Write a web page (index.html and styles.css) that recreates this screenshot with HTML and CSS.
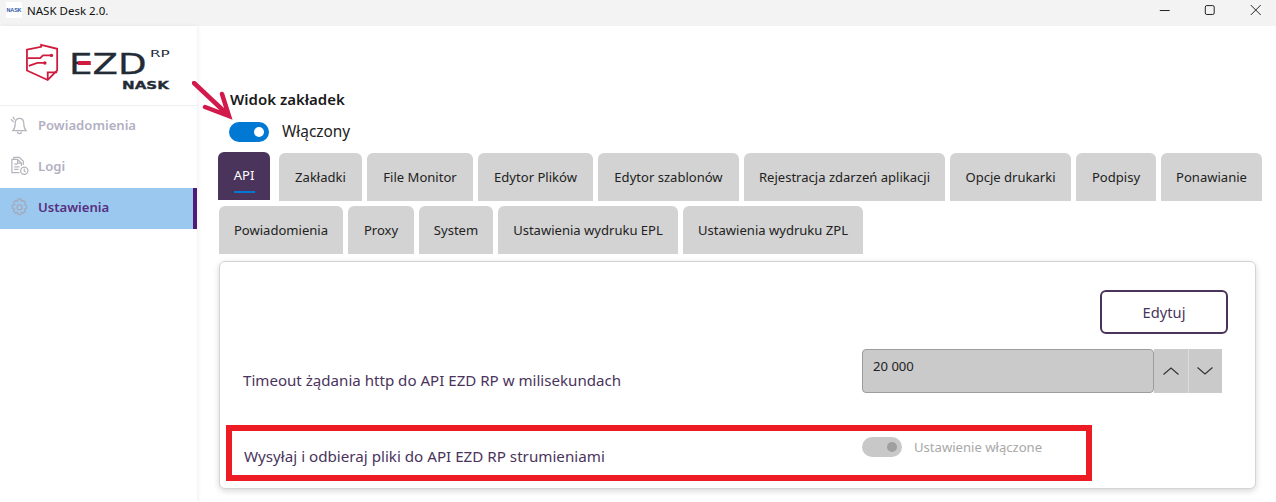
FILE: index.html
```html
<!DOCTYPE html>
<html lang="pl">
<head>
<meta charset="utf-8">
<title>NASK Desk 2.0.</title>
<link rel="stylesheet" href="styles.css">
</head>
<body>
<header class="titlebar">
  <div class="app-icon">NASK</div>
  <div class="app-title">NASK Desk 2.0.</div>
  <div class="win-controls">
    <svg class="win-btn" viewBox="0 0 46 26"><path d="M18 10.5h10"/></svg>
    <svg class="win-btn" viewBox="0 0 46 26"><rect x="18.5" y="5.5" width="9" height="9" rx="1.5"/></svg>
    <svg class="win-btn" viewBox="0 0 46 26"><path d="M18 5l10 10M28 5L18 15"/></svg>
  </div>
</header>
<div class="app">
  <aside class="sidebar">
    <div class="logo">
      <svg class="logo-mark" viewBox="0 0 36 40"><path d="M1 7L16 4V2L33 6V29L23 39L1 29Z"/><path d="M23 39V31H33"/><path d="M2 16H15L18 13H27M3 24L12 21H20"/><circle cx="27" cy="13" r="1.8" class="dot"/><circle cx="20" cy="21" r="1.8" class="dot"/></svg>
      <div class="wordmark">
        <div class="ezd-line"><span class="ezd">EZD</span><span class="rp">RP</span></div>
        <div class="nask">NASK</div>
      </div>
    </div>
    <nav class="nav">
      <div class="nav-item">
        <svg class="nav-icon" viewBox="0 0 20 20"><path d="M10 3c-3 0-4.500 2.500-4.500 5.500 0 4-1 6-2.500 7.500h14c-1.500-1.500-2.500-3.500-2.500-7.500 0-3-1.500-5.500-4.500-5.500zM8 17a2 2 0 0 0 4 0M1 4l3 3M3 1.500l2 3"/></svg>
        <span>Powiadomienia</span>
      </div>
      <div class="nav-item">
        <svg class="nav-icon" viewBox="0 0 20 20"><path d="M10 17H2V3h6l4 4v3M8 3v4h4M4.500 8H8M4.500 11H10M4.500 13.500H9M4 3V1h6l4 4v4"/><circle cx="15" cy="15" r="3.800"/><path d="M15 13v2.200l1.500 1"/></svg>
        <span>Logi</span>
      </div>
      <div class="nav-item active">
        <svg class="nav-icon" viewBox="0 0 20 20"><path d="M8.500 1.500h3l.5 2.500 2-.9 2.300 2.100-1.200 2.100 2.400 1v3l-2.400 1 1.200 2.100-2.300 2.100-2-.9-.5 2.500h-3l-.5-2.500-2 .9-2.300-2.100 1.200-2.100-2.400-1v-3l2.400-1-1.200-2.100 2.300-2.100 2 .9z"/><circle cx="10" cy="10.300" r="2.700"/></svg>
        <span>Ustawienia</span>
      </div>
    </nav>
  </aside>
  <main class="main">
    <svg class="arrow" viewBox="0 0 44 40"><path d="M2 2L35 33M13 26L37 35L30 13"/></svg>
    <h2 class="heading">Widok zakładek</h2>
    <div class="tab-view-toggle">
      <span class="switch on"></span>
      <span class="switch-label">Włączony</span>
    </div>
    <div class="tabs">
      <div class="tab active"><span class="tab-label">API</span></div>
      <div class="tab">Zakładki</div>
      <div class="tab">File Monitor</div>
      <div class="tab">Edytor Plików</div>
      <div class="tab">Edytor szablonów</div>
      <div class="tab">Rejestracja zdarzeń aplikacji</div>
      <div class="tab">Opcje drukarki</div>
      <div class="tab">Podpisy</div>
      <div class="tab">Ponawianie</div>
      <div class="tab">Powiadomienia</div>
      <div class="tab">Proxy</div>
      <div class="tab">System</div>
      <div class="tab">Ustawienia wydruku EPL</div>
      <div class="tab">Ustawienia wydruku ZPL</div>
    </div>
    <section class="card">
      <div class="card-actions"><button class="edit-btn">Edytuj</button></div>
      <div class="row row-timeout">
        <div class="row-label">Timeout żądania http do API EZD RP w milisekundach</div>
        <div class="spin">
          <div class="spin-input">20 000</div>
          <div class="spin-btn"><svg viewBox="0 0 16 8"><path d="M0.500 7.500L8 1L15.500 7.500"/></svg></div>
          <div class="spin-btn"><svg viewBox="0 0 16 8"><path d="M0.500 0.500L8 7L15.500 0.500"/></svg></div>
        </div>
      </div>
      <div class="row row-stream">
        <div class="row-label">Wysyłaj i odbieraj pliki do API EZD RP strumieniami</div>
        <div class="stream-ctrl">
          <span class="switch disabled"></span>
          <span class="disabled-label">Ustawienie włączone</span>
        </div>
      </div>
      <div class="highlight"></div>
    </section>
  </main>
</div>
</body>
</html>
```
FILE: styles.css
```css
* { box-sizing: border-box; }
html, body { margin: 0; height: 100%; }
body {
  width: 1276px;
  height: 502px;
  overflow: hidden;
  background: #fff;
  font-family: "Noto Sans", "Open Sans", sans-serif;
  color: #222;
}
.titlebar {
  height: 26px;
  background: #f3f3f3;
  display: flex;
  align-items: flex-start;
}
.app-icon {
  width: 16px;
  height: 16px;
  margin: 2px 0 0 6px;
  background: #fff;
  color: #2f5aa8;
  font: 700 5.500px/16px "Liberation Sans", sans-serif;
  text-align: center;
  letter-spacing: -0.2px;
}
.app-title {
  margin: 2px 0 0 5px;
  font-size: 11.500px;
  line-height: 17px;
  color: #111;
}
.win-controls { margin-left: auto; display: flex; margin-right: -2px; }
.win-btn { width: 45.500px; height: 26px; fill: none; stroke: #222; stroke-width: 1; }
.app { display: flex; height: 476px; }
.sidebar {
  width: 197px;
  flex: none;
  background: #fff;
  box-shadow: 1px 0 4px rgba(0, 0, 0, .07);
}
.logo {
  height: 80px;
  border-bottom: 1px solid #efefef;
  display: flex;
  align-items: flex-start;
  padding: 17px 0 0 26px;
  gap: 12px;
}
.logo-mark { width: 34px; height: 38px; flex: none; fill: none; stroke: #cf1b3d; stroke-width: 1.900; }
.logo-mark .dot { fill: #cf1b3d; stroke: none; }
.wordmark { width: 100px; margin-top: 9px; }
.ezd-line { display: flex; align-items: flex-start; height: 24px; }
.ezd {
  display: block;
  position: relative;
  flex: none;
  font: 400 29px/24px "DejaVu Sans", sans-serif;
  color: #232b36;
  width: 81px;
  transform: scaleX(1.28);
  transform-origin: left;
  -webkit-text-stroke: .3px #232b36;
  margin-left: -3px;
}
.ezd::after {
  content: "";
  position: absolute;
  left: 7px;
  top: 9px;
  width: 10px;
  height: 3.500px;
  background: #cf1b3d;
}
.rp {
  font: 400 9.500px/10px "DejaVu Sans", sans-serif;
  color: #232b36;
  margin: -3px 0 0 0;
  transform: scaleX(1.6);
  transform-origin: left;
}
.nask {
  font: 700 10.500px/10px "DejaVu Sans", sans-serif;
  color: #232b36;
  width: 34px;
  margin: 4px 0 0 50px;
  transform: scaleX(1.44);
  transform-origin: left;
  -webkit-text-stroke: .3px #232b36;
}
.nav { display: flex; flex-direction: column; }
.nav-item {
  height: 41px;
  display: flex;
  align-items: center;
  gap: 9px;
  padding: 0 0 3px 10px;
  font-size: 13.100px;
  font-weight: 600;
  color: #b3afc3;
}
.nav-item.active {
  background: #9bc8ef;
  color: #57307f;
  border-right: 4px solid #4f1a78;
}
.nav-icon { width: 19px; height: 20px; flex: none; fill: none; stroke: #b5b5bd; stroke-width: 1.300; }
.active .nav-icon { stroke: #a3aab9; }
.main { flex: 1; position: relative; padding: 62px 14px 0 21px; }
.arrow {
  position: absolute;
  left: -5px;
  top: 55px;
  width: 44px;
  height: 40px;
  fill: none;
  stroke: #d2194b;
  stroke-width: 4.500;
  stroke-linecap: round;
}
.heading {
  margin: 0 0 0 12px;
  font-size: 15px;
  font-weight: 600;
  line-height: 22px;
  color: #1a1a1a;
}
.tab-view-toggle { display: flex; align-items: center; gap: 13px; margin: 11px 0 0 11px; height: 22px; }
.switch {
  display: block;
  width: 40px;
  height: 20px;
  border-radius: 10px;
  position: relative;
  flex: none;
}
.switch::after {
  content: "";
  position: absolute;
  right: 5px;
  top: 5px;
  width: 10px;
  height: 10px;
  border-radius: 50%;
}
.switch.on { background: #0078d4; }
.switch.on::after { background: #fff; }
.switch.disabled { background: #c8c8c8; }
.switch.disabled::after { background: #9f9f9f; }
.switch-label { font-size: 15.400px; line-height: 20px; color: #222; }
.tabs {
  display: flex;
  flex-wrap: wrap;
  gap: 5px;
  margin: 10px 0 0 1px;
}
.tab {
  height: 48px;
  background: #d3d3d3;
  border-radius: 6px 6px 0 0;
  font-size: 13.050px;
  line-height: 48px;
  text-align: center;
  color: #222;
}
.tab:nth-child(1) { width: 52px; }
.tab:nth-child(2) { width: 83px; }
.tab:nth-child(3) { width: 106px; }
.tab:nth-child(4) { width: 115px; }
.tab:nth-child(5) { width: 141px; }
.tab:nth-child(6) { width: 201px; }
.tab:nth-child(7) { width: 121px; }
.tab:nth-child(8) { width: 80px; }
.tab:nth-child(9) { width: 101px; }
.tab:nth-child(10) { width: 124px; }
.tab:nth-child(11) { width: 66px; }
.tab:nth-child(12) { width: 74px; }
.tab:nth-child(13) { width: 180px; }
.tab:nth-child(14) { width: 180px; }
.tab.active {
  background: #4a345c;
  color: #fff;
  margin: -1px 4px 1px -1px;
}
.tab-label { display: block; width: 21px; margin: 0 auto; line-height: 46px; height: 39px; border-bottom: 2px solid #0078d4; box-sizing: content-box; }
.card {
  position: relative;
  margin: 7px 0 0 1px;
  width: 1037px;
  height: 228px;
  background: #fff;
  border: 1px solid #d4d4d4;
  border-radius: 6px;
  box-shadow: 0 2px 6px rgba(0, 0, 0, .16);
  padding: 28px 27px 0 23px;
}
.card-actions { display: flex; justify-content: flex-end; }
.edit-btn {
  width: 128px;
  height: 44px;
  background: #fff;
  border: 2px solid #4a345c;
  border-radius: 6px;
  font: 400 14.700px "Noto Sans", sans-serif;
  color: #4a345c;
  padding: 0;
}
.row { display: flex; }
.row-label { width: 619px; flex: none; font-size: 15.100px; line-height: 20px; color: #4a345c; }
.row-timeout { margin-top: 15px; align-items: flex-end; height: 44px; }
.row-timeout .row-label { height: 23px; }
.spin { display: flex; height: 44px; }
.spin-input {
  width: 292px;
  height: 44px;
  background: #cacaca;
  border: 1px solid #9d9d9d;
  border-radius: 4px;
  padding: 6px 10px;
  font-size: 13.100px;
  line-height: 20px;
  color: #222;
}
.spin-btn {
  width: 34px;
  height: 44px;
  background: #cacaca;
  display: flex;
  align-items: center;
  justify-content: center;
}
.spin-btn + .spin-btn { border-left: 1px solid #dcdcdc; padding-right: 1px; }
.spin-btn svg { width: 16px; height: 8px; fill: none; stroke: #333; stroke-width: 1.100; }
.row-stream { margin-top: 44px; align-items: center; height: 20px; }
.row-stream .row-label { margin-top: 18px; padding-left: 1px; font-size: 15.180px; }
.stream-ctrl { display: flex; align-items: center; gap: 12px; }
.disabled-label { font-size: 13.100px; color: #a8a8a8; line-height: 20px; }
.highlight {
  position: absolute;
  left: 6px;
  top: 163px;
  width: 866px;
  height: 56px;
  border: 6px solid #ed1c24;
  pointer-events: none;
}
```
